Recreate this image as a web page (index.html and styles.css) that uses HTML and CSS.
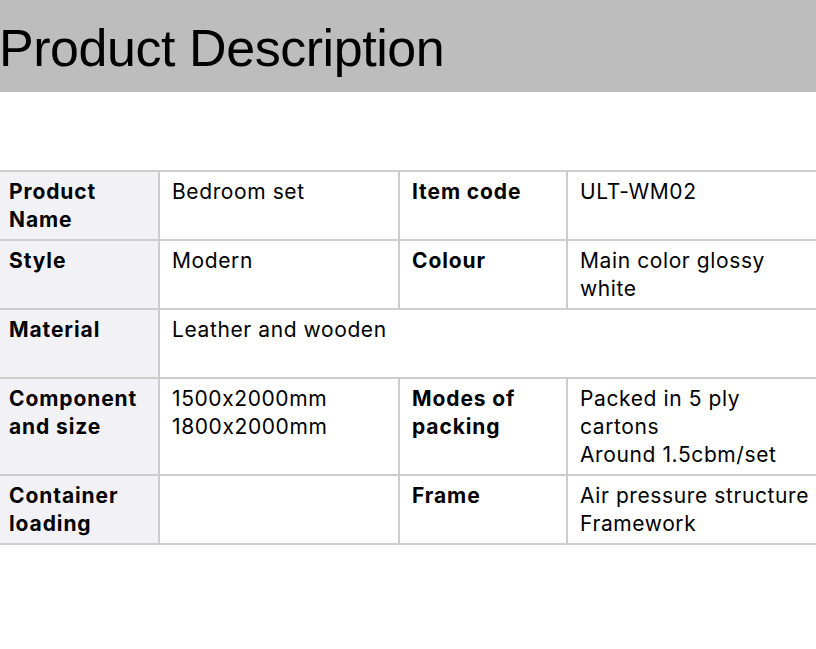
FILE: index.html
```html
<!DOCTYPE html>
<html>
<head>
<meta charset="utf-8">
<link rel="stylesheet" href="styles.css">
</head>
<body>
<header class="title-bar"><h1 class="title">Product Description</h1></header>
<div class="spec">
  <div class="cell label">Product Name</div>
  <div class="cell">Bedroom set</div>
  <div class="cell label2">Item code</div>
  <div class="cell">ULT-WM02</div>

  <div class="cell label">Style</div>
  <div class="cell">Modern</div>
  <div class="cell label2">Colour</div>
  <div class="cell">Main color glossy<br>white</div>

  <div class="cell label">Material</div>
  <div class="cell span3">Leather and wooden</div>

  <div class="cell label">Component and size</div>
  <div class="cell">1500x2000mm<br>1800x2000mm</div>
  <div class="cell label2">Modes of packing</div>
  <div class="cell">Packed in 5 ply<br>cartons<br>Around 1.5cbm/set</div>

  <div class="cell label">Container loading</div>
  <div class="cell"></div>
  <div class="cell label2">Frame</div>
  <div class="cell">Air pressure structure<br>Framework</div>
</div>
</body>
</html>
```

FILE: styles.css
```css
html, body {
  margin: 0;
  padding: 0;
  background: #ffffff;
  overflow: hidden;
}
body {
  width: 816px;
  height: 649px;
  font-family: Inter, "Liberation Sans", sans-serif;
  font-feature-settings: "calt" 0;
  color: #000;
}
.title-bar {
  background: #bdbdbd;
  height: 92px;
  display: flex;
  align-items: flex-start;
  overflow: hidden;
}
.title {
  margin: 0 0 0 -1px;
  padding: 17px 0 0 0;
  font-family: "Liberation Sans", Arial, sans-serif;
  font-size: 52px;
  font-weight: 400;
  line-height: 63px;
  letter-spacing: -0.45px;
  white-space: nowrap;
}
.spec {
  margin-top: 78px;
  margin-left: -4px;
  width: 860px;
  display: grid;
  grid-template-columns: 160px 238px 166px 290px;
  grid-auto-rows: minmax(67px, auto);
  gap: 2px;
  background: #cdcdcd;
  border-top: 2px solid #cdcdcd;
  border-bottom: 2px solid #cdcdcd;
  border-left: 2px solid #cdcdcd;
}
.cell {
  background: #fff;
  padding: 6px 8px 5px 12px;
  font-size: 21px;
  line-height: 28px;
  letter-spacing: 0.6px;
}
.label {
  background: #f2f2f6;
  font-weight: 700;
  padding-left: 11px;
  letter-spacing: 0.9px;
}
.label2 {
  font-weight: 700;
  letter-spacing: 0.9px;
}
.span3 {
  grid-column: span 3;
}
```
